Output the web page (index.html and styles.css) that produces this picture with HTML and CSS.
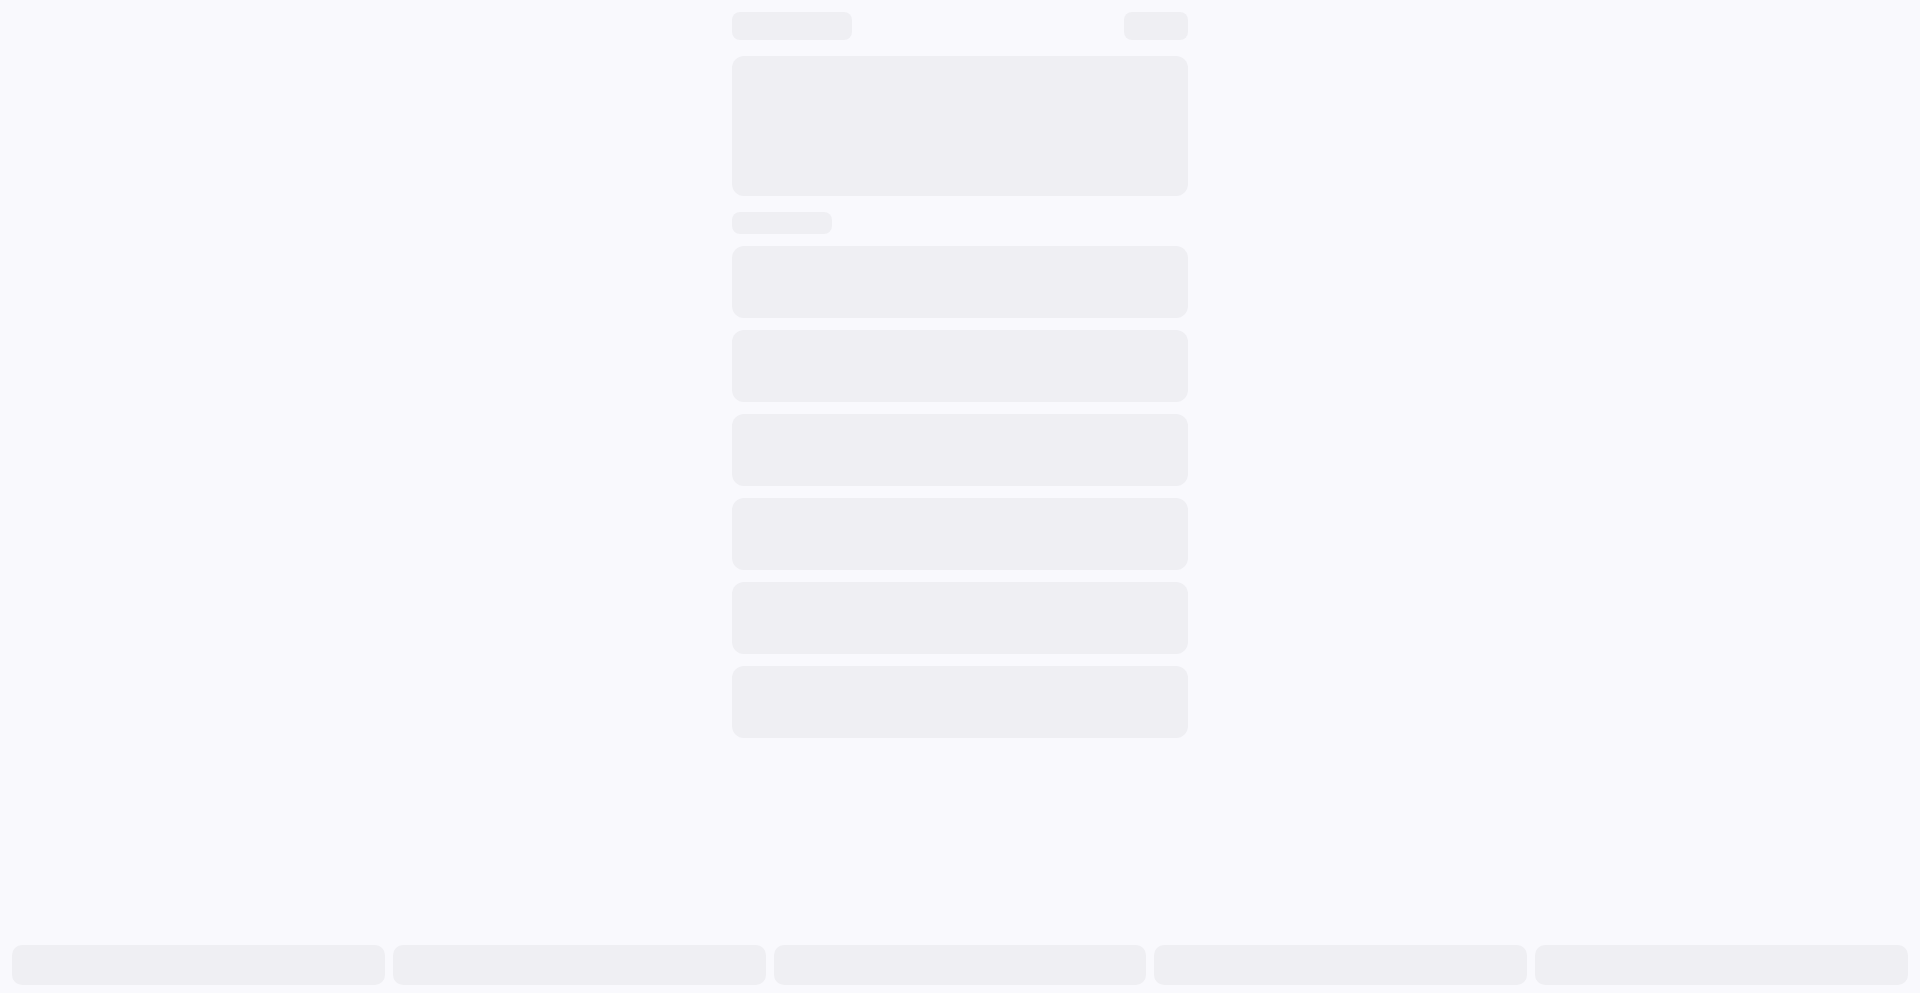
FILE: index.html
```html
<!DOCTYPE html>
<html lang="en">
<head>
    <meta charset="UTF-8">
    <meta name="viewport" content="width=device-width, initial-scale=1.0">
    <title>Loading</title>
    <link rel="stylesheet" href="styles.css">
</head>
<body>
    <main class="page">
        <header class="page-header">
            <div class="skel skel-title"></div>
            <div class="skel skel-action"></div>
        </header>

        <div class="skel skel-hero"></div>

        <div class="skel skel-label"></div>

        <div class="list">
            <div class="skel skel-row"></div>
            <div class="skel skel-row"></div>
            <div class="skel skel-row"></div>
            <div class="skel skel-row"></div>
            <div class="skel skel-row"></div>
            <div class="skel skel-row"></div>
        </div>
    </main>

    <nav class="bottom-nav">
        <div class="skel skel-tab"></div>
        <div class="skel skel-tab"></div>
        <div class="skel skel-tab"></div>
        <div class="skel skel-tab"></div>
        <div class="skel skel-tab"></div>
    </nav>
</body>
</html>
```

FILE: styles.css
```css
/* Reset */
* { margin: 0; padding: 0; box-sizing: border-box; }
html, body { height: 100%; }
body { font-family: "Inter", "Liberation Sans", sans-serif; background-color: #f9f9fd; color: #222; }

.page { width: 456px; margin: 0 auto; padding-top: 12px; }
.page-header { display: flex; justify-content: space-between; align-items: center; margin-bottom: 16px; }

.skel { background-color: #efeff3; border-radius: 12px; }
.skel-title { width: 120px; height: 28px; border-radius: 8px; }
.skel-action { width: 64px; height: 28px; border-radius: 8px; }
.skel-hero { height: 140px; margin-bottom: 16px; }
.skel-label { width: 100px; height: 22px; border-radius: 8px; margin-bottom: 12px; }

.list { display: flex; flex-direction: column; gap: 12px; }
.skel-row { height: 72px; }

.bottom-nav { position: fixed; left: 0; right: 0; bottom: 0; display: flex; gap: 8px; padding: 8px 12px; }
.skel-tab { flex: 1; height: 40px; border-radius: 10px; }
```
